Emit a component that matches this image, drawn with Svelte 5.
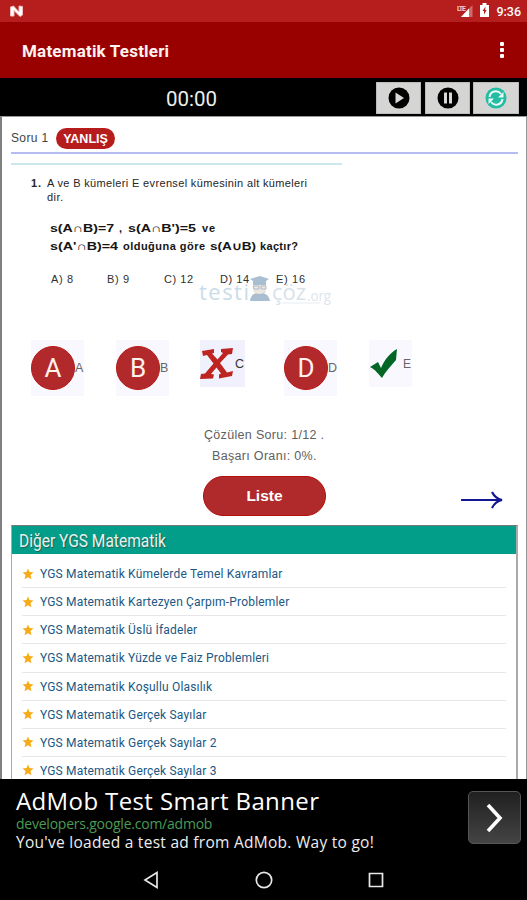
<script>
  const links = [
    'YGS Matematik Kümelerde Temel Kavramlar',
    'YGS Matematik Kartezyen Çarpım-Problemler',
    'YGS Matematik Üslü İfadeler',
    'YGS Matematik Yüzde ve Faiz Problemleri',
    'YGS Matematik Koşullu Olasılık',
    'YGS Matematik Gerçek Sayılar',
    'YGS Matematik Gerçek Sayılar 2',
    'YGS Matematik Gerçek Sayılar 3'
  ];
  const answers = ['A', 'B', 'C', 'D', 'E'];
</script>

<div class="phone">
  <header class="status">
    <svg class="n" width="15" height="12" viewBox="0 0 15 12"><path d="M1.500 11V2l3-1 5.500 6V1l3.500.5V10l-2.500 1.500L5 5.500V11z" fill="#fff" stroke="#f3bcbc" stroke-width="1"/></svg>
    <svg class="signal" width="16" height="14" viewBox="0 0 16 14"><path d="M15.500 1v12H4z" fill="#d06a6a"/><path d="M12 4.500V13H4z" fill="#fff"/><text x="0" y="6.500" font-size="7" font-weight="700" fill="#f2caca" textLength="9">LTE</text></svg>
    <svg class="battery" width="9" height="14" viewBox="0 0 9 14"><path d="M2.500 2V0h4v2H9v12H0V2z" fill="#fff"/><path d="M5.500 3.500 2.500 8H4v3.500L6.700 7H5.200z" fill="#b51e1c"/></svg>
    <span>9:36</span>
  </header>
  <div class="appbar">
    <h1>Matematik Testleri</h1>
    <div class="dots"><i></i><i></i><i></i></div>
  </div>
  <div class="timer">
    <span class="time">00:00</span>
    <button class="play" aria-label="play"><svg width="22" height="22" viewBox="0 0 22 22"><circle cx="11" cy="11" r="10.500"/><path d="M7.500 5.500v11l8.500-5.500z" fill="#d8d8d8"/></svg></button>
    <button class="pause" aria-label="pause"><svg width="22" height="22" viewBox="0 0 22 22"><circle cx="11" cy="11" r="10.500"/><path d="M7 5.500h3v11H7zM12 5.500h3v11h-3z" fill="#d8d8d8"/></svg></button>
    <button class="reload" aria-label="reload"><svg width="22" height="22" viewBox="0 0 22 22"><circle cx="11" cy="11" r="10.500" fill="#22bda3"/><g fill="none" stroke="#edf7f5" stroke-width="2"><path d="M4.500 10c.8-6 8-7.500 11.500-3"/><path d="M17.500 12c-.8 6-8 7.500-11.500 3"/></g><path d="M18.500 5v5.500H13zM3.500 17v-5.500H9z" fill="#edf7f5"/></svg></button>
  </div>

  <main>
    <div class="qhead"><span>Soru 1</span><b>YANLIŞ</b></div>
    <svg class="question" width="331" height="149" viewBox="11 163 331 149">
      <path d="M11 164h331" stroke="#cbe8ec" stroke-width="2"/>
      <g font-size="11" fill="#252525">
        <text x="31" y="187" font-weight="700" textLength="10">1.</text>
        <text x="47" y="187" textLength="260">A ve B kümeleri E evrensel kümesinin alt kümeleri</text>
        <text x="47" y="201" textLength="16">dir.</text>
      </g>
      <g font-size="11" font-weight="700" fill="#151515">
        <text x="50" y="231.500" textLength="64" lengthAdjust="spacingAndGlyphs">s(A∩B)=7</text>
        <text x="119" y="231.500">,</text>
        <text x="128" y="231.500" textLength="68" lengthAdjust="spacingAndGlyphs">s(A∩B')=5</text>
        <text x="202" y="231.500" textLength="13">ve</text>
        <text x="50" y="249.500" textLength="68" lengthAdjust="spacingAndGlyphs">s(A'∩B)=4</text>
        <text x="123" y="249.500" textLength="82">olduğuna göre</text>
        <text x="210" y="249.500" textLength="46" lengthAdjust="spacingAndGlyphs">s(A∪B)</text>
        <text x="260" y="249.500" textLength="38">kaçtır?</text>
      </g>
      <g class="mark" fill="#c9dcea">
        <text x="199" y="300" font-size="22" textLength="50">testi</text>
        <text x="272" y="300" font-size="22" textLength="34" fill="#d7e2ea">çöz</text>
        <text x="307" y="301" font-size="14" textLength="24" lengthAdjust="spacingAndGlyphs" fill="#dce5ed">.org</text>
        <path d="m250 279 10-3 9 3-3 2v7c0 5-3 7-6 7s-7-3-7-7v-7zM250 301c1-7 6-9 10-7 5-2 9 1 10 7z" fill="#a9bfd1"/>
        <path d="M253 285h13v6c-3 4-10 4-13 0z" fill="#eee7df"/><path d="M253 286h6v3h-5zm8 0h5v3h-5z" fill="none" stroke="#b0bdca"/>
        <path d="M282 303h38" stroke="#e7edf2" stroke-width="1"/>
      </g>
      <g font-size="11" fill="#303030">
        <text x="51" y="282.500" textLength="22">A) 8</text>
        <text x="107" y="282.500" textLength="22">B) 9</text>
        <text x="164" y="282.500" textLength="29">C) 12</text>
        <text x="220" y="282.500" textLength="29">D) 14</text>
        <text x="276" y="282.500" textLength="29">E) 16</text>
      </g>
    </svg>

    <div class="answers">
      {#each answers as a}
        <div class="answer {a}">
          {#if a === 'C'}
            <svg width="34" height="32" viewBox="0 0 34 32"><path d="M2 3 14 1v4l-2 .5 5.500 6L23 5l-2-1V1l12-1-1 6-4 .5-8 8.500 7 9.500 6-1.500-1 5-13 2.500v-4l2-1-4.500-6-5.500 6.500 3 .5-1 4L0 31l1-5 4-.5 8.500-10L7 7 3 8z" fill="#be2420"/></svg>
          {:else if a === 'E'}
            <svg width="28" height="29" viewBox="0 0 28 29"><path d="m0 18 8-5 3 6C15 10 20 4 27 0l-1 11C21 17 15 23 12 29 9 26 5 20 0 18z" fill="#036625"/></svg>
          {:else}
            <span class="disc">{a}</span>
          {/if}
          <small>{a}</small>
        </div>
      {/each}
    </div>

    <div class="score"><p>Çözülen Soru: 1/12 .</p><p class="rate">Başarı Oranı: 0%.</p></div>
    <div class="nav">
      <button class="liste">Liste</button>
      <svg width="43" height="18" viewBox="0 0 43 18"><path d="M0 9h40M31 1c2 4 5 7 10 8-5 1-8 4-10 8" fill="none" stroke="#151694" stroke-width="2.200"/></svg>
    </div>

    <section>
      <h2><span>Diğer YGS Matematik</span></h2>
      <ul>
        {#each links as l}
          <li><svg width="12" height="12" viewBox="0 0 12 12"><path d="m6 .5 1.500 3.600 4 .3-3 2.700 1 4.200L6 9.200l-3.500 2.100 1-4.200-3-2.700 4-.3z" fill="#f6ac18"/></svg><span>{l}</span></li>
        {/each}
      </ul>
    </section>
  </main>

  <aside>
    <div><strong>AdMob Test Smart Banner</strong><em>developers.google.com/admob</em><p>You've loaded a test ad from AdMob. Way to go!</p></div>
    <button aria-label="open"><svg width="20" height="30" viewBox="0 0 20 30"><path d="m3 2 12 13L3 28" fill="none" stroke="#fff" stroke-width="3.600"/></svg></button>
  </aside>
  <footer>
    <svg width="16" height="18" viewBox="0 0 16 18"><path d="M14 1.500v15L2 9z"/></svg>
    <svg width="18" height="18" viewBox="0 0 18 18"><circle cx="9" cy="9" r="7.700"/></svg>
    <svg width="16" height="16" viewBox="0 0 16 16"><path d="M1.500 1.500h13v13h-13z"/></svg>
  </footer>
</div>

<style>
  :global(body) { background: #000; }
  * { box-sizing: border-box; }
  h1, h2, p, ul { margin: 0; padding: 0; font-weight: 400; }
  button { border: 0; padding: 0; display: flex; align-items: center; justify-content: center; }
  svg { display: block; flex: none; }
  .phone { width: 527px; height: 900px; overflow: hidden; display: flex; flex-direction: column; background: #000; font-family: "Liberation Sans", Arial, sans-serif; white-space: nowrap; }
  .status { height: 22px; flex: none; background: #b51e1c; display: flex; align-items: center; padding: 0 6px 0 9px; color: #fff; font: 500 12.500px Roboto, sans-serif; }
  .n { margin-right: auto; }
  .signal { margin-right: 7px; }
  .battery { margin-right: 7px; margin-top: -2px; }
  .appbar { height: 56px; flex: none; background: #990000; display: flex; align-items: center; justify-content: space-between; padding: 0 23px 0 22px; }
  h1 { color: #fff3f1; font: 700 17px Roboto, sans-serif; letter-spacing: .2px; padding-top: 1px; }
  .dots { display: grid; gap: 2px; }
  .dots i { width: 4px; height: 4px; background: #fff; border-radius: 1px; }
  .timer { height: 38px; flex: none; display: flex; align-items: center; padding-right: 8px; }
  .time { color: #eee; font: 20.500px Roboto, sans-serif; margin-left: 166px; margin-right: auto; padding-top: 3px; }
  .timer button { width: 46px; height: 32px; background: #d5d5d3; margin-left: 3px; margin-top: 1px; border: 1px solid #bdbdbd; }
  .timer .play { margin-right: 1px; width: 45px; }
  .timer .pause { width: 45px; }
  main { height: 663px; flex: none; overflow: hidden; background: #fff; border-left: 2px solid #808080; border-right: 1px solid #999; border-top: 1px solid #999; padding: 0 8px 0 9px; }
  .qhead { height: 37px; display: flex; align-items: center; gap: 8px; padding-top: 7px; border-bottom: 2px solid #b4bcf1; font-size: 12px; color: #444; letter-spacing: .35px; }
  .qhead span { width: 37px; }
  .qhead b { width: 59px; height: 21px; border-radius: 11px; background: #b71c1c; color: #fff; font-size: 12.500px; line-height: 22px; text-align: center; letter-spacing: 0; }
  .question { margin-top: 9px; font-family: "Liberation Sans", Arial, sans-serif; }
  .mark { font-family: "Open Sans", sans-serif; }
  .answers { display: flex; align-items: flex-start; margin: 28px 0 0 20px; height: 56px; }
  .answer { height: 56px; width: 53px; background: #f8f8fe; display: flex; align-items: center; margin-right: 32px; color: #666; }
  .answer small { font-size: 12.500px; }
  .disc { width: 44px; height: 44px; border-radius: 50%; background: #b2292b; border: 1px solid #b91818; color: #fff2ee; font: 26px/42px Roboto, sans-serif; text-align: center; flex: none; }
  .answer.C { width: 45px; height: 47px; margin-right: 39px; margin-left: -1px; background: #f0f1fd; color: #333; }
  .answer.C small { margin-left: 1px; }
  .answer.E { width: 43px; height: 47px; padding-left: 1px; }
  .answer.E small { margin-left: 5px; font-size: 12px; }
  .score { margin: 29px 0 0 193px; color: #606060; font-size: 12.500px; line-height: 21px; letter-spacing: .32px; }
  .rate { padding-left: 8px; }
  .nav { display: flex; align-items: center; margin-left: 192px; margin-top: 9px; height: 40px; }
  .liste { width: 123px; height: 40px; border-radius: 20px; border: 1px solid #b30d0d; background: #b02a2c; color: #fff; font: 700 15.500px "Liberation Sans", sans-serif; }
  .nav svg { margin-left: 135px; margin-top: 8px; }
  section { margin-top: 9px; border: 1px solid #75817e; border-color: #777 #aaa #aaa #aaa; border-width: 1px 2px 0 1px; }
  h2 { height: 28px; background: #029e8a; color: #e9f2ee; font: 18px/29px Roboto, sans-serif; padding-left: 7px; text-shadow: 1px 1px 1px #265c53; }
  h2 span { display: inline-block; transform: scaleX(.863); transform-origin: left; }
  ul { list-style: none; padding: 6px 10px 0; }
  li { height: 28.130px; border-bottom: 1px solid #e6e6e6; display: flex; align-items: center; gap: 6px; color: #205783; font: 12px Roboto, sans-serif; }
  li span { letter-spacing: .18px; padding-top: 1px; }
  aside { height: 78px; flex: none; display: flex; justify-content: space-between; padding: 7px 6px 0 16px; font-family: "Open Sans", sans-serif; color: #eee; }
  strong { display: block; font-size: 24px; font-weight: 400; line-height: 29px; color: #fff; letter-spacing: .38px; }
  em { display: block; font-style: normal; font-size: 14px; line-height: 17px; color: #4d9a54; letter-spacing: -.23px; }
  aside p { font-size: 15.500px; line-height: 20px; letter-spacing: .27px; }
  aside button { width: 53px; height: 53px; margin-top: 5px; border: 1px solid #555; border-radius: 5px; background: linear-gradient(#202020, #444); }
  footer { height: 43px; flex: none; display: flex; align-items: center; padding: 3px 0 0 143px; }
  footer svg { fill: none; stroke: #e7e7e7; stroke-width: 1.700; }
  footer svg:nth-child(2) { margin-left: 96px; }
  footer svg:nth-child(3) { margin-left: 95px; }
</style>
